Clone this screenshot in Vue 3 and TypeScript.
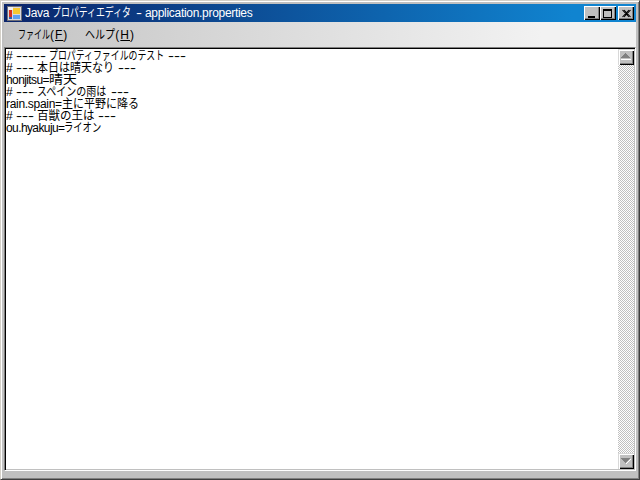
<script setup lang="ts">
interface Run {
  t: string
  cls: string
  style?: Record<string, string>
}

const fit = (t: string, w: number, base = 12): Run => ({
  t,
  cls: 'fit',
  style: { width: `${t.length * w}px`, transform: `scaleX(${w / base})` },
})
const dash = (n: number): Run => fit('-'.repeat(n), 6, 4)
const txt = (t: string, cls = 'plain'): Run => ({ t, cls })
const sp = txt(' ')

const title: Run[] = [
  txt('Java ', 'lat'),
  fit('プロパティエディタ', 8.9),
  sp,
  dash(1),
  sp,
  txt('application.properties', 'lat'),
]
const menus: Run[][] = [
  [fit('ファイル', 8)],
  [fit('ヘルプ', 10)],
]
const lines: Run[][] = [
  [txt('# '), dash(5), sp, fit('プロパティファイルのテスト', 8.9), sp, dash(3)],
  [txt('# '), dash(3), sp, fit('本日は晴天なり', 11), sp, dash(3)],
  [txt('honjitsu=', 'tight'), fit('晴天', 14)],
  [txt('# '), dash(3), sp, fit('スペインの雨は', 10), sp, dash(3)],
  [txt('rain.spain=', 'lat'), fit('主に平野に降る', 11)],
  [txt('# '), dash(3), sp, fit('百獣の王は', 11.5), sp, dash(3)],
  [txt('ou.hyakuju=', 'tight'), fit('ライオン', 9.3)],
]
</script>

<template>
  <div class="window">
    <div class="titlebar">
      <svg class="appicon" width="15" height="15" viewBox="0 0 15 15" shape-rendering="crispEdges">
        <rect x="0.500" y="0.500" width="14" height="14" fill="#d8d8e0" stroke="#707078" />
        <rect x="1" y="1" width="5" height="3" fill="#f0f0f0" />
        <rect x="2" y="4" width="3" height="7" fill="#d83020" />
        <rect x="2" y="11" width="3" height="2" fill="#3060b0" />
        <rect x="6" y="2" width="7" height="6" fill="#f8c830" />
        <rect x="6" y="9" width="7" height="4" fill="#60a0f0" />
      </svg>
      <span class="title"><span v-for="(run, i) in title" :key="i" :class="run.cls" :style="run.style">{{ run.t }}</span></span>
      <div class="caption-buttons">
        <button class="capbtn" aria-label="最小化">
          <svg width="14" height="12" viewBox="0 0 14 12" shape-rendering="crispEdges"><rect x="3" y="9" width="7" height="2" fill="#000" /></svg>
        </button>
        <button class="capbtn" aria-label="最大化">
          <svg width="14" height="12" viewBox="0 0 14 12" shape-rendering="crispEdges"><path d="M2.500 2.500h8v8h-8z" fill="none" stroke="#000" /><rect x="2" y="2" width="9" height="2" fill="#000" /></svg>
        </button>
        <button class="capbtn close" aria-label="閉じる">
          <svg width="14" height="12" viewBox="0 0 14 12"><path d="M3.500 3l6.500 7M5 3l6.500 7M10 3l-6.500 7M11.500 3l-6.500 7" fill="none" stroke="#000" stroke-width="1.100" /></svg>
        </button>
      </div>
    </div>
    <div class="menubar">
      <span class="menu"><span v-for="(run, i) in menus[0]" :key="i" :class="run.cls" :style="run.style">{{ run.t }}</span><span class="paren">(<u>F</u>)</span></span>
      <span class="menu"><span v-for="(run, i) in menus[1]" :key="i" :class="run.cls" :style="run.style">{{ run.t }}</span><span class="paren">(<u>H</u>)</span></span>
    </div>
    <div class="editor">
      <div class="text">
        <div v-for="(line, i) in lines" :key="i" class="line"><span v-for="(run, j) in line" :key="j" :class="run.cls" :style="run.style">{{ run.t }}</span></div>
      </div>
      <div class="scrollbar">
        <div class="sbtn">
          <svg width="12" height="12" viewBox="0 0 12 12" shape-rendering="crispEdges">
            <path d="M5 2h1v1h1v1h1v1h1v1h1v1h-9v-1h1v-1h1v-1h1v-1h1z" fill="#808080" /><rect x="1" y="8" width="10" height="1" fill="#fff" />
          </svg>
        </div>
        <div class="track"></div>
        <div class="sbtn">
          <svg width="12" height="12" viewBox="0 0 12 12" shape-rendering="crispEdges">
            <path d="M1 3h9v1h-1v1h-1v1h-1v1h-1v1h-1v-1h-1v-1h-1v-1h-1v-1h-1z" fill="#808080" /><path d="M10 4h1v1h-1v1h-1v1h-1v1h-1v1h-1v-1h1v-1h1v-1h1v-1h1z" fill="#fff" />
          </svg>
        </div>
      </div>
    </div>
  </div>
</template>

<style>
html, body { margin: 0; background: #c0c0c0; }
</style>

<style scoped>
.window {
  box-sizing: border-box;
  width: 640px;
  height: 480px;
  display: flex;
  flex-direction: column;
  padding: 3px 3px 8px;
  background: #c0c0c0;
  border-top: 1px solid #d4d0c8;
  border-left: 1px solid #d4d0c8;
  border-right: 1px solid #404040;
  border-bottom: 1px solid #404040;
  box-shadow: inset 1px 1px 0 #fff, inset -1px -1px 0 #808080;
  font-family: "Liberation Sans", "Noto Sans CJK JP", sans-serif;
  font-size: 12px;
}
.plain, .lat, .tight { display: inline-block; white-space: pre; }
.plain { letter-spacing: 0; }
.lat { letter-spacing: -0.3px; }
.tight { letter-spacing: -0.6px; }
.fit {
  display: inline-block;
  transform-origin: 0 50%;
  white-space: pre;
}
.paren { letter-spacing: 1px; }
.titlebar {
  height: 18px;
  flex: none;
  display: flex;
  align-items: center;
  padding: 0 2px 0 3px;
  background: linear-gradient(90deg, #0a246a, #1084d0 90%);
  color: #fff;
}
.appicon { flex: none; margin-right: 3px; }
.title { flex: 1; white-space: pre; line-height: 18px; }
.caption-buttons { display: flex; }
.capbtn {
  box-sizing: border-box;
  width: 16px;
  height: 14px;
  padding: 0;
  display: flex;
  align-items: center;
  justify-content: center;
  background: #c0c0c0;
  border: 0;
  box-shadow: inset 1px 1px 0 #fff, inset -1px -1px 0 #000, inset -2px -2px 0 #808080;
}
.capbtn.close { margin-left: 2px; }
.menubar {
  height: 25px;
  flex: none;
  display: flex;
  align-items: center;
  gap: 17px;
  padding: 0 0 2px 14px;
  box-sizing: border-box;
  background: linear-gradient(90deg, #c4c4c4, #f2f2f2 85%);
  color: #000;
}
.menu { white-space: pre; }
.editor {
  flex: 1;
  min-height: 0;
  display: flex;
  background: #fff;
  border-top: 1px solid #808080;
  border-left: 1px solid #808080;
  border-right: 1px solid #fff;
  border-bottom: 1px solid #fff;
  box-shadow: inset 1px 1px 0 #000, inset -1px -1px 0 #c0c0c0;
  padding: 1px;
}
.text { flex: 1; padding-top: 1px; color: #000; }
.line { height: 12px; line-height: 12px; white-space: pre; }
.scrollbar { width: 16px; flex: none; display: flex; flex-direction: column; }
.sbtn {
  box-sizing: border-box;
  width: 16px;
  height: 16px;
  flex: none;
  display: flex;
  align-items: center;
  justify-content: center;
  background: #c0c0c0;
  box-shadow: inset 1px 1px 0 #d8d8d8, inset 2px 2px 0 #fff, inset -1px -1px 0 #000, inset -2px -2px 0 #808080;
}
.track {
  flex: 1;
  background-color: #fff;
  background-image: conic-gradient(#c0c0c0 25%, #fff 0 50%, #c0c0c0 0 75%, #fff 0);
  background-size: 2px 2px;
}
</style>
